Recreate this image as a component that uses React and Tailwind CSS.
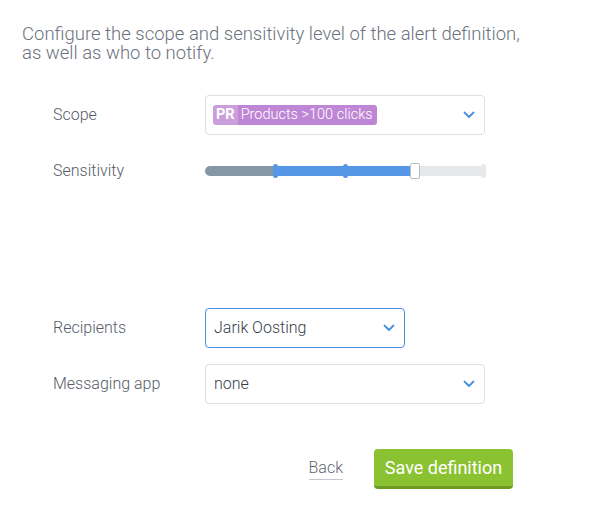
import React from "react";

function Chevron() {
  return (
    <svg width="12" height="8" viewBox="0 0 12 8" fill="none">
      <path d="M1.5 1.5 L6 6 L10.5 1.5" stroke="#4a90e2" strokeWidth="1.8" strokeLinecap="round" strokeLinejoin="round" />
    </svg>
  );
}

function Row({ label, children }) {
  return (
    <div className="flex items-center h-[40px]">
      <div className="w-[152px] text-[16px] font-light text-[#555c68]">{label}</div>
      {children}
    </div>
  );
}

export default function App() {
  return (
    <div
      className="w-[595px] h-[516px] bg-white pt-[25px] pl-[22px] overflow-hidden"
      style={{ fontFamily: "Roboto, 'Liberation Sans', sans-serif" }}
    >
      <p className="text-[18.5px] leading-[19px] font-light text-[#6b727d]">
        Configure the scope and sensitivity level of the alert definition,
        <br />
        as well as who to notify.
      </p>

      <div className="ml-[31px] mt-[32px] flex flex-col gap-[16px]">
        <Row label="Scope">
          <div className="w-[280px] h-[40px] border border-[#dcdfe3] rounded-[4px] flex items-center justify-between pl-[7px] pr-[9px]">
            <div className="flex h-[20px] rounded-[3px] overflow-hidden text-white text-[14.5px] leading-[20px]">
              <span className="bg-[#ca9edb] px-[3px] font-bold">PR</span>
              <span className="bg-[#bf86d6] pl-[3px] pr-[4px] font-light">Products &gt;100 clicks</span>
            </div>
            <Chevron />
          </div>
        </Row>
        <Row label="Sensitivity">
          <div className="relative w-[280px] h-[10px]">
            <div className="flex h-full rounded-full overflow-hidden">
              <div className="w-[70px] bg-[#8796a5]" />
              <div className="w-[140px] bg-[#5596e6]" />
              <div className="flex-1 bg-[#e6e9ec]" />
            </div>
            <div className="absolute left-[68px] top-[-2px] w-[5px] h-[14px] rounded-full bg-[#5596e6]" />
            <div className="absolute left-[138px] top-[-2px] w-[5px] h-[14px] rounded-full bg-[#5596e6]" />
            <div className="absolute right-[-1px] top-[-2px] w-[5px] h-[14px] rounded-full bg-[#e6e9ec]" />
            <div className="absolute left-[205px] top-[-3px] w-[10px] h-[16px] rounded-[2px] bg-white border border-[#b9bec4]" />
          </div>
        </Row>
        <div className="h-[85px]" />
        <Row label="Recipients">
          <div className="w-[200px] h-[40px] border border-[#4a90e2] rounded-[4px] flex items-center justify-between pl-[8px] pr-[9px] text-[16px] font-light text-[#363d48]">
            <span>Jarik Oosting</span>
            <Chevron />
          </div>
        </Row>
        <Row label="Messaging app">
          <div className="w-[280px] h-[40px] border border-[#dcdfe3] rounded-[4px] flex items-center justify-between pl-[8px] pr-[9px] text-[16px] font-light text-[#363d48]">
            <span>none</span>
            <Chevron />
          </div>
        </Row>
      </div>

      <div className="mt-[45px] w-[491px] flex items-center justify-end gap-[31px]">
        <span className="text-[16px] font-light text-[#5f6672] border-b border-[#c5c9ce] leading-[18px] pb-[2px]">Back</span>
        <button className="w-[139px] h-[40px] rounded-[4px] bg-[#8bc232] border-b-[3px] border-[#6d9b25] text-white text-[18px]">
          Save definition
        </button>
      </div>
    </div>
  );
}
